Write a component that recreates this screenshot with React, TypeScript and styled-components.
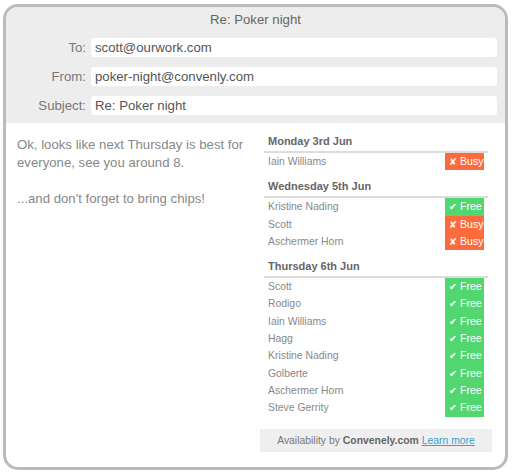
import React from "react";
import styled, { createGlobalStyle } from "styled-components";

const Global = createGlobalStyle`
  html, body { margin: 0; padding: 0; background: #fff; }
  body { font-family: "Liberation Sans", Arial, Helvetica, sans-serif; }
`;

const Frame = styled.div`
  box-sizing: border-box;
  margin: 4px 0 0 3px;
  width: 505px;
  height: 466px;
  border: 3px solid #bbbbbb;
  border-radius: 15px;
  overflow: hidden;
  display: flex;
  flex-direction: column;
  background: #fff;
`;

const Header = styled.div`
  background: #ededed;
  padding: 4px 8px 8px 0;
  display: flex;
  flex-direction: column;
  gap: 10px;
`;

const Title = styled.div`
  text-align: center;
  font-size: 13.2px;
  line-height: 17px;
  color: #666;
  margin-left: 8px;
`;

const FieldRow = styled.div`
  display: flex;
  align-items: center;
  gap: 5px;
`;

const Label = styled.div`
  width: 80px;
  text-align: right;
  font-size: 13.2px;
  color: #777;
`;

const Input = styled.div`
  flex: 1;
  height: 19px;
  line-height: 19px;
  background: #fff;
  border-radius: 3px;
  padding-left: 4px;
  font-size: 13.2px;
  color: #555;
`;

const Body = styled.div`
  flex: 1;
  display: flex;
  padding: 11px 13px 0 11px;
`;

const Message = styled.div`
  flex: 1;
  font-size: 13.2px;
  line-height: 18px;
  color: #888;
  padding-top: 2px;
  p { margin: 0 0 18px 0; }
`;

const Side = styled.div`
  width: 232px;
  display: flex;
  flex-direction: column;
  align-items: center;
`;

const Day = styled.div<{ first?: boolean }>`
  width: 224px;
  margin-top: ${(p) => (p.first ? "0" : "9px")};
`;

const DayHead = styled.div`
  font-size: 11px;
  font-weight: bold;
  line-height: 14px;
  color: #666;
  padding: 0 4px 3px 4px;
  border-bottom: 2px solid #dcdcdc;
`;

const Row = styled.div`
  display: flex;
  align-items: stretch;
  height: 17.3px;
  padding: 0 4px;
`;

const Name = styled.div`
  flex: 1;
  font-size: 10.4px;
  line-height: 17px;
  color: #888;
`;

const Badge = styled.div<{ free: boolean }>`
  width: 39px;
  box-sizing: border-box;
  padding-left: 4px;
  background: ${(p) => (p.free ? "#52d770" : "#fd6a3c")};
  color: #fff;
  font-size: 10.6px;
  line-height: 17px;
  white-space: nowrap;
  span { font-family: "DejaVu Sans", sans-serif; font-size: 9.5px; margin-right: 3px; }
`;

const Footer = styled.div`
  margin-top: 12px;
  width: 232px;
  height: 23px;
  background: #efefef;
  font-size: 10.4px;
  line-height: 23px;
  color: #777;
  text-align: center;
  b { color: #666; }
  a { color: #3aa0cc; text-decoration: underline; }
`;

type Status = "free" | "busy";
const days: { title: string; rows: [string, Status][] }[] = [
  { title: "Monday 3rd Jun", rows: [["Iain Williams", "busy"]] },
  {
    title: "Wednesday 5th Jun",
    rows: [
      ["Kristine Nading", "free"],
      ["Scott", "busy"],
      ["Aschermer Horn", "busy"],
    ],
  },
  {
    title: "Thursday 6th Jun",
    rows: [
      ["Scott", "free"],
      ["Rodigo", "free"],
      ["Iain Williams", "free"],
      ["Hagg", "free"],
      ["Kristine Nading", "free"],
      ["Golberte", "free"],
      ["Aschermer Horn", "free"],
      ["Steve Gerrity", "free"],
    ],
  },
];

export default function App() {
  return (
    <>
      <Global />
      <Frame>
        <Header>
          <Title>Re: Poker night</Title>
          <FieldRow>
            <Label>To:</Label>
            <Input>scott@ourwork.com</Input>
          </FieldRow>
          <FieldRow>
            <Label>From:</Label>
            <Input>poker-night@convenly.com</Input>
          </FieldRow>
          <FieldRow>
            <Label>Subject:</Label>
            <Input>Re: Poker night</Input>
          </FieldRow>
        </Header>
        <Body>
          <Message>
            <p>Ok, looks like next Thursday is best for everyone, see you around 8.</p>
            <p>...and don't forget to bring chips!</p>
          </Message>
          <Side>
            {days.map((d, i) => (
              <Day key={d.title} first={i === 0}>
                <DayHead>{d.title}</DayHead>
                {d.rows.map(([n, s], j) => (
                  <Row key={j}>
                    <Name>{n}</Name>
                    <Badge free={s === "free"}>
                      <span>{s === "free" ? "✔" : "✘"}</span>
                      {s === "free" ? "Free" : "Busy"}
                    </Badge>
                  </Row>
                ))}
              </Day>
            ))}
            <Footer>
              Availability by <b>Convenely.com</b> <a href="#">Learn more</a>
            </Footer>
          </Side>
        </Body>
      </Frame>
    </>
  );
}
